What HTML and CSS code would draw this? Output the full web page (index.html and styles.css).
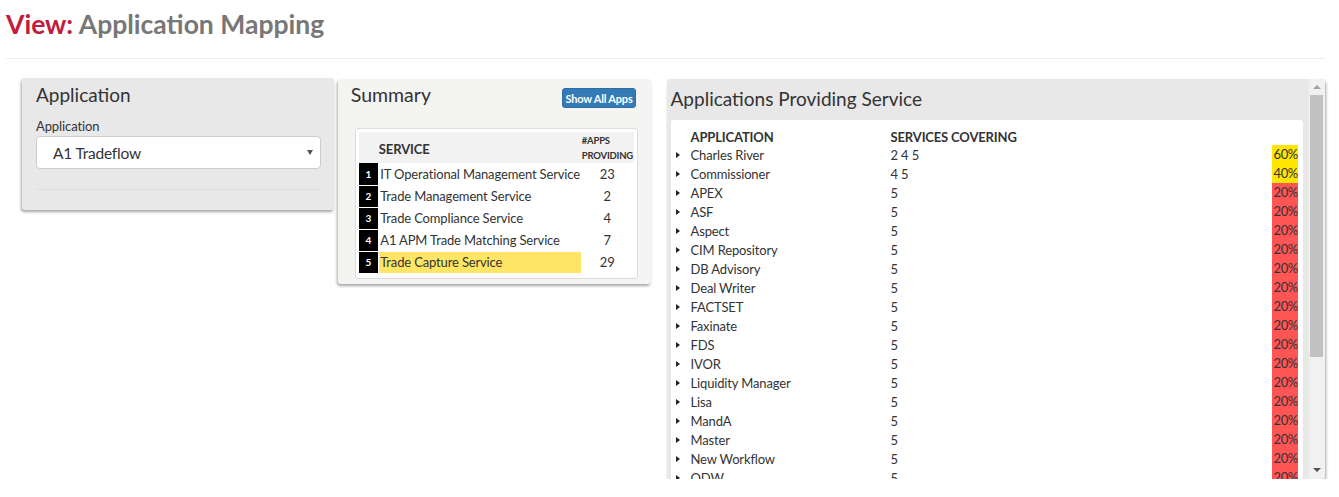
FILE: index.html
```html
<!DOCTYPE html>
<html>
<head>
<meta charset="utf-8">
<link rel="stylesheet" href="styles.css">
</head>
<body>
<div class="page">
  <h1 class="page-title"><span class="view">View:</span> Application Mapping</h1>
  <hr class="title-rule">
  <div class="panels">
    <div class="panel panel-app">
      <h2 class="panel-title">Application</h2>
      <div class="field-label">Application</div>
      <div class="select">
        <span class="select-text">A1 Tradeflow</span>
        <span class="caret"></span>
      </div>
      <hr class="panel-rule">
    </div>

    <div class="panel panel-summary">
      <div class="summary-head">
        <h2 class="panel-title">Summary</h2>
        <button class="btn-primary">Show All Apps</button>
      </div>
      <div class="summary-box">
        <table class="summary-table">
          <thead>
            <tr>
              <th class="c-num"></th>
              <th class="c-svc">SERVICE</th>
              <th class="c-cnt">#APPS<br>PROVIDING</th>
            </tr>
          </thead>
          <tbody>
            <tr><td class="c-num">1</td><td class="c-svc">IT Operational Management Service</td><td class="c-cnt">23</td></tr>
            <tr><td class="c-num">2</td><td class="c-svc">Trade Management Service</td><td class="c-cnt">2</td></tr>
            <tr><td class="c-num">3</td><td class="c-svc">Trade Compliance Service</td><td class="c-cnt">4</td></tr>
            <tr><td class="c-num">4</td><td class="c-svc">A1 APM Trade Matching Service</td><td class="c-cnt">7</td></tr>
            <tr><td class="c-num">5</td><td class="c-svc hl">Trade Capture Service</td><td class="c-cnt">29</td></tr>
          </tbody>
        </table>
      </div>
    </div>

    <div class="panel panel-apps">
      <div class="apps-scroll">
        <h2 class="panel-title apps-title">Applications Providing Service</h2>
        <div class="apps-box">
          <div class="apps-row apps-header">
            <span class="tri-slot"></span>
            <span class="a-name">APPLICATION</span>
            <span class="a-svc">SERVICES COVERING</span>
            <span class="a-pct"></span>
          </div>
          <div class="apps-row"><span class="tri-slot"><span class="tri"></span></span><span class="a-name">Charles River</span><span class="a-svc">2 4 5</span><span class="a-pct pct-yellow">60%</span></div>
          <div class="apps-row"><span class="tri-slot"><span class="tri"></span></span><span class="a-name">Commissioner</span><span class="a-svc">4 5</span><span class="a-pct pct-yellow">40%</span></div>
          <div class="apps-row"><span class="tri-slot"><span class="tri"></span></span><span class="a-name">APEX</span><span class="a-svc">5</span><span class="a-pct pct-red">20%</span></div>
          <div class="apps-row"><span class="tri-slot"><span class="tri"></span></span><span class="a-name">ASF</span><span class="a-svc">5</span><span class="a-pct pct-red">20%</span></div>
          <div class="apps-row"><span class="tri-slot"><span class="tri"></span></span><span class="a-name">Aspect</span><span class="a-svc">5</span><span class="a-pct pct-red">20%</span></div>
          <div class="apps-row"><span class="tri-slot"><span class="tri"></span></span><span class="a-name">CIM Repository</span><span class="a-svc">5</span><span class="a-pct pct-red">20%</span></div>
          <div class="apps-row"><span class="tri-slot"><span class="tri"></span></span><span class="a-name">DB Advisory</span><span class="a-svc">5</span><span class="a-pct pct-red">20%</span></div>
          <div class="apps-row"><span class="tri-slot"><span class="tri"></span></span><span class="a-name">Deal Writer</span><span class="a-svc">5</span><span class="a-pct pct-red">20%</span></div>
          <div class="apps-row"><span class="tri-slot"><span class="tri"></span></span><span class="a-name">FACTSET</span><span class="a-svc">5</span><span class="a-pct pct-red">20%</span></div>
          <div class="apps-row"><span class="tri-slot"><span class="tri"></span></span><span class="a-name">Faxinate</span><span class="a-svc">5</span><span class="a-pct pct-red">20%</span></div>
          <div class="apps-row"><span class="tri-slot"><span class="tri"></span></span><span class="a-name">FDS</span><span class="a-svc">5</span><span class="a-pct pct-red">20%</span></div>
          <div class="apps-row"><span class="tri-slot"><span class="tri"></span></span><span class="a-name">IVOR</span><span class="a-svc">5</span><span class="a-pct pct-red">20%</span></div>
          <div class="apps-row"><span class="tri-slot"><span class="tri"></span></span><span class="a-name">Liquidity Manager</span><span class="a-svc">5</span><span class="a-pct pct-red">20%</span></div>
          <div class="apps-row"><span class="tri-slot"><span class="tri"></span></span><span class="a-name">Lisa</span><span class="a-svc">5</span><span class="a-pct pct-red">20%</span></div>
          <div class="apps-row"><span class="tri-slot"><span class="tri"></span></span><span class="a-name">MandA</span><span class="a-svc">5</span><span class="a-pct pct-red">20%</span></div>
          <div class="apps-row"><span class="tri-slot"><span class="tri"></span></span><span class="a-name">Master</span><span class="a-svc">5</span><span class="a-pct pct-red">20%</span></div>
          <div class="apps-row"><span class="tri-slot"><span class="tri"></span></span><span class="a-name">New Workflow</span><span class="a-svc">5</span><span class="a-pct pct-red">20%</span></div>
          <div class="apps-row"><span class="tri-slot"><span class="tri"></span></span><span class="a-name">ODW</span><span class="a-svc">5</span><span class="a-pct pct-red">20%</span></div>
        </div>
      </div>
      <div class="scrollbar">
        <span class="sb-btn sb-up"><span class="sb-arrow-up"></span></span>
        <span class="sb-thumb"></span>
        <span class="sb-fill"></span>
        <span class="sb-btn sb-down"><span class="sb-arrow-down"></span></span>
      </div>
    </div>
  </div>
</div>
</body>
</html>
```

FILE: styles.css
```css
* { box-sizing: border-box; }
html, body { margin: 0; padding: 0; background: #fff; }
body {
  font-family: Lato, "Liberation Sans", sans-serif;
  color: #333;
  font-size: 13px;
}
.page { padding: 0 14px 0 6px; }

.page-title {
  margin: 0;
  padding-top: 8px;
  font-size: 26.5px;
  font-weight: 700;
  color: #777;
  line-height: 32px;
  height: 42px;
}
.page-title .view { color: #c3193a; }
.title-rule {
  margin: 16px 0 0 0;
  border: 0;
  border-top: 1px solid #eee;
  height: 0;
}

.panels {
  display: flex;
  align-items: flex-start;
  padding-left: 16px;
  margin-top: 20px;
}

.panel {
  box-shadow: -1px 2px 3px rgba(0,0,0,0.35);
  border-radius: 3px;
}
.panel-title {
  margin: 0;
  font-size: 19px;
  font-weight: 400;
  color: #333;
  line-height: 24px;
}

/* Application panel */
.panel-app {
  width: 312px;
  background: #e8e8e8;
  padding: 5px 13px 20px 14px;
  margin-top: -1px;
}
.field-label {
  margin-top: 10px;
  font-size: 13px;
  line-height: 18px;
  letter-spacing: -0.1px;
}
.select {
  margin-top: 1px;
  height: 33px;
  background: #fff;
  border: 1px solid #ccc;
  border-radius: 4px;
  display: flex;
  align-items: center;
  justify-content: space-between;
  padding: 0 7px 0 16px;
}
.select-text { font-size: 15.5px; color: #333; letter-spacing: -0.2px; }
.caret {
  width: 0; height: 0;
  border-left: 3px solid transparent;
  border-right: 3px solid transparent;
  border-top: 5px solid #555;
}
.panel-rule {
  margin: 20px 0 0 0;
  border: 0;
  border-top: 1px solid #ddd;
}

/* Summary panel */
.panel-summary {
  width: 313px;
  margin-left: 4px;
  background: #f4f4f2;
  padding: 4px 13px 5px 13px;
}
.summary-head {
  display: flex;
  justify-content: space-between;
  align-items: flex-start;
}
.summary-head .panel-title { font-size: 19.5px; }
.btn-primary {
  margin-top: 5px;
  margin-right: 2px;
  background: #337ab7;
  color: #fff;
  border: 1px solid #2e6da4;
  border-radius: 3px;
  font-family: inherit;
  font-weight: 700;
  font-size: 11px;
  letter-spacing: -0.2px;
  height: 20px;
  padding: 0 2px;
  line-height: 17px;
}
.summary-box {
  margin-top: 20px;
  margin-left: 4px;
  background: #fff;
  border: 1px solid #ddd;
  border-radius: 3px;
  padding: 3px 3px 4px 3px;
}
.summary-table {
  border-collapse: collapse;
  width: 100%;
  table-layout: fixed;
}
.summary-table th {
  background: #f2f2f2;
  text-align: left;
  font-weight: 700;
  padding: 0;
  height: 30px;
}
.summary-table th.c-num { width: 20px; }
.summary-table th.c-svc { width: 202px; padding-left: 0; padding-top: 3px; font-size: 13px; letter-spacing: -0.1px; }
.summary-table th.c-cnt { font-size: 9.5px; line-height: 15px; padding-left: 1px; letter-spacing: -0.2px; padding-top: 1px; }
.summary-table td {
  padding: 0;
  height: 22px;
  font-size: 13px;
  letter-spacing: -0.15px;
  border-bottom: 1px solid #fff;
  white-space: nowrap;
}
.summary-table td.c-num {
  background: #000;
  color: #fff;
  font-weight: 700;
  font-size: 10px;
  letter-spacing: 0;
  text-align: center;
  border-right: 1px solid #fff;
}
.summary-table td.c-svc { padding-left: 1px; }
.summary-table td.c-svc.hl { background: #ffe566; }
.summary-table td.c-cnt { text-align: center; }

/* Apps panel */
.panel-apps {
  width: 659px;
  margin-left: 16px;
  height: 400px;
  background: #e8e8e8;
  display: flex;
  overflow: hidden;
  box-shadow: 1px 2px 3px rgba(0,0,0,0.35);
}
.apps-scroll {
  flex: 1;
  overflow: hidden;
  padding: 8px 5px 0 4px;
}
.apps-title { margin-bottom: 9px; }
.apps-box {
  background: #fff;
  border-radius: 3px 3px 0 0;
  padding: 5px 5px 0 5px;
}
.apps-row {
  display: flex;
  align-items: center;
  height: 19px;
  font-size: 13px;
  letter-spacing: -0.15px;
}
.apps-header {
  font-weight: 700;
  height: 20px;
  padding-top: 3px;
}
.tri-slot { width: 15px; display: flex; align-items: center; }
.tri {
  width: 0; height: 0;
  border-top: 3.5px solid transparent;
  border-bottom: 3.5px solid transparent;
  border-left: 4px solid #222;
}
.a-name { width: 200px; }
.a-svc { flex: 1; }
.a-pct {
  width: 26px;
  height: 100%;
  text-align: right;
  line-height: 19px;
  letter-spacing: -0.3px;
}
.pct-yellow { background: #ffe500; }
.pct-red { background: #ff5555; }

/* scrollbar */
.scrollbar {
  width: 17px;
  background: #f1f1f1;
  display: flex;
  flex-direction: column;
  border-left: 1px solid #e8e8e8;
}
.sb-btn {
  height: 16px;
  display: flex;
  align-items: center;
  justify-content: center;
}
.sb-down { height: 18px; }
.sb-arrow-up {
  width: 0; height: 0;
  border-left: 4px solid transparent;
  border-right: 4px solid transparent;
  border-bottom: 4px solid #a3a3a3;
}
.sb-arrow-down {
  width: 0; height: 0;
  border-left: 4px solid transparent;
  border-right: 4px solid transparent;
  border-top: 4px solid #505050;
}
.sb-thumb {
  height: 262px;
  margin: 0 2px 0 1px;
  background: #c1c1c1;
}
.sb-fill { flex: 1; }
```
